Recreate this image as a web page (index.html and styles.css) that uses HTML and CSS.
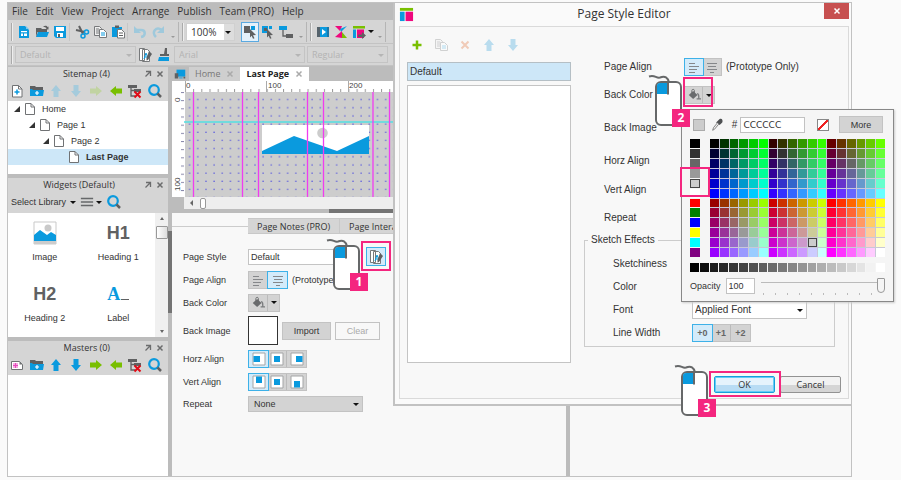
FILE: index.html
```html
<!DOCTYPE html>
<html lang="en">
<head>
<meta charset="utf-8">
<title>Page Style Editor</title>
<link rel="stylesheet" href="styles.css">
</head>
<body>
<svg class="defs" aria-hidden="true">
  <symbol id="i-new" viewBox="0 0 16 16"><path d="M3 2h6l4 4v8H3z" fill="#0a9ade"/><path d="M10 2l3 3h-3z" fill="#7cc8ee"/><path d="M5 7h6v1.300H5zM5 9.500h2V12H5zM8 9.500h3V12H8z" fill="#fff"/></symbol>
  <symbol id="i-open" viewBox="0 0 16 16"><path d="M2 4h5l1 1h5v3H2zM9 3c2-2 4-1 4.500 0l1-.5v3h-3l1-1.200C12 3.500 10.500 3 9 3z" fill="#5f6061"/><path d="M4 8h11l-2 5H2z" fill="#0a9ade"/><path d="M2 6v7l1.500-5z" fill="#5f6061"/></symbol>
  <symbol id="i-save" viewBox="0 0 16 16"><path d="M2 2h12v12H4l-2-2z" fill="#0a9ade"/><path d="M4 3h8v4H4zM5 9h6v4H5z" fill="#fff"/><path d="M6 10h2v3H6z" fill="#5f6061"/></symbol>
  <symbol id="i-cut" viewBox="0 0 16 16"><path d="M2 6l9 2M5 2l4 8" stroke="#5f6061" stroke-width="2" fill="none"/><circle cx="12.500" cy="8" r="2" fill="none" stroke="#0a9ade" stroke-width="1.500"/><circle cx="9" cy="12" r="2" fill="none" stroke="#0a9ade" stroke-width="1.500"/></symbol>
  <symbol id="i-copy" viewBox="0 0 16 16"><path d="M2.500 2.500h5l2 2v7h-7z" fill="#eee" stroke="#77797b"/><path d="M4 5h3M4 7h3M4 9h3" stroke="#77797b"/><path d="M7.500 5.500h4l3 3v5h-7z" fill="#fff" stroke="#77797b"/><path d="M9 9h4M9 11h4" stroke="#0a9ade"/></symbol>
  <symbol id="i-paste" viewBox="0 0 16 16"><path d="M2 3h10v10H2z" fill="#0a9ade"/><path d="M5 1.500h4V4H5z" fill="#5f6061"/><path d="M7.500 5.500h4l3 3v5.500h-7z" fill="#fff" stroke="#77797b"/><path d="M9 9h4M9 11.500h4" stroke="#5f6061"/></symbol>
  <symbol id="i-undo" viewBox="0 0 16 16"><path d="M4 6h5c5 0 5 6 0 7" fill="none" stroke="#9fc9dc" stroke-width="2.500"/><path d="M2 2v7h7z" fill="#9fc9dc"/></symbol>
  <symbol id="i-redo" viewBox="0 0 16 16"><path d="M12 6C6 2 1 8 6 13" fill="none" stroke="#9fc9dc" stroke-width="2.500"/><path d="M14 2v7H7z" fill="#9fc9dc"/></symbol>
  <symbol id="i-sel1" viewBox="0 0 16 16"><path d="M2 2h6v7H2z" fill="#5f6061"/><path d="M9 2h4v4H9z" fill="#0a9ade"/><path d="M8 5l6 6-3 .3 1.500 3-1.500.5-1.300-3L8 13.500z" fill="#5f6061"/></symbol>
  <symbol id="i-sel2" viewBox="0 0 16 16"><path d="M2 2h6v7H2zM9 2h3v3H9z" fill="#0a9ade"/><path d="M4 4h3v3H4z" fill="#5f6061"/><path d="M7 5l6 6-3 .3 1.500 3-1.500.5-1.300-3L7 13.500z" fill="#5f6061"/></symbol>
  <symbol id="i-conn" viewBox="0 0 16 16"><path d="M1 2h8v4H1z" fill="#0a9ade"/><path d="M5 6v6h4" fill="none" stroke="#5f6061" stroke-width="1.300"/><path d="M8 10h7v4H8z" fill="#5f6061"/></symbol>
  <symbol id="i-play" viewBox="0 0 16 16"><path d="M2 3h12v10H2z" fill="#0a9ade"/><path d="M2 3h3v10H2z" fill="#56636c"/><path d="M12 3h2v10h-2z" fill="#1c78a8"/><path d="M7 5l4 3-4 3z" fill="#fff"/></symbol>
  <symbol id="i-share" viewBox="0 0 16 16"><path d="M2 2h7l-2 5z" fill="#ef087e"/><path d="M14 2L8 8l-1-3z" fill="#0a9ade"/><path d="M2 13l7-6v7z" fill="#ef087e"/><path d="M9 8l5 6H9z" fill="#79bf00"/></symbol>
  <symbol id="i-gen" viewBox="0 0 16 16"><path d="M2 2h12v2.500H2z" fill="#79bf00"/><path d="M2 5.500h3V14H2z" fill="#0a9ade"/><path d="M6 5.500h7V14H6z" fill="#ef087e"/><path d="M7 10.500h4V8l4 3.500-4 3.500v-2H7z" fill="#5f6061"/></symbol>
  <symbol id="i-logo" viewBox="0 0 16 16"><path d="M1 1h14v3H1z" fill="#79bf00"/><path d="M1 5h5v10H1z" fill="#0a9ade"/><path d="M7 5h8v10H7z" fill="#ef087e"/></symbol>
  <symbol id="i-style" viewBox="0 0 16 16"><path d="M2.500 1.500h5v12h-5zM5.500 2.500h5l2 2v10h-7z" fill="#fff" stroke="#77797b"/><path d="M7 12l2-6 2 5M7.500 10h3" stroke="#0a9ade" fill="none"/><path d="M12 4l3 3-4 6-1.500.5V11z" fill="#5f6061"/></symbol>
  <symbol id="i-brush" viewBox="0 0 16 16"><path d="M10 1h2v6h-3z" fill="#5f6061"/><path d="M5 7h9v2H5z" fill="#5f6061"/><path d="M4 10h10v4H3z" fill="#0a9ade"/></symbol>
  <symbol id="i-page" viewBox="0 0 16 16"><path d="M3.500 2.500h5.500l3.500 3.500v7.500h-9z" fill="#fff" stroke="#707274"/><path d="M9 2.500V6h3.500" fill="none" stroke="#707274"/></symbol>
  <symbol id="i-addpage" viewBox="0 0 16 16"><path d="M3.500 2.500h6L13 6v8H3.500z" fill="#fff" stroke="#707274"/><path d="M9.500 2.500V6H13" fill="none" stroke="#707274"/><path d="M8 6.500v5M5.500 9h5" stroke="#0a9ade" stroke-width="1.500"/></symbol>
  <symbol id="i-addmaster" viewBox="0 0 16 16"><path d="M2.500 4.500h8l3 3v5h-11z" fill="#fff" stroke="#707274"/><path d="M10.500 4.500v3h3z" fill="#707274"/><path d="M4 6h5v5H4z" fill="#f7a9e2"/><path d="M6.500 6v5M4 8.500h5" stroke="#e549bd"/></symbol>
  <symbol id="i-addfolder" viewBox="0 0 16 16"><path d="M1 3h5l1 1h7v3H1z" fill="#5f6061"/><path d="M1 6h2l1 1h11l-1 6H1z" fill="#0a9ade"/><path d="M8 8v4M6 10h4" stroke="#fff" stroke-width="1.200"/></symbol>
  <symbol id="i-up" viewBox="0 0 16 16"><path d="M8 2l5 6h-2.500v6h-5V8H3z"/></symbol>
  <symbol id="i-down" viewBox="0 0 16 16"><path d="M8 14l5-6h-2.500V2h-5v6H3z"/></symbol>
  <symbol id="i-right" viewBox="0 0 16 16"><path d="M14 8L8 3v2.500H2v5h6V13z"/></symbol>
  <symbol id="i-left" viewBox="0 0 16 16"><path d="M2 8l6-5v2.500h6v5H8V13z"/></symbol>
  <symbol id="i-del" viewBox="0 0 16 16"><path d="M1 2h9v3H1zM7 6h7v3H7z" fill="#5f6061"/><path d="M4 5v8h4M4 7.500h4" fill="none" stroke="#5f6061" stroke-width="1.300"/><path d="M7.500 8.500l6 6M13.500 8.500l-6 6" stroke="#e10b17" stroke-width="2"/></symbol>
  <symbol id="i-find" viewBox="0 0 16 16"><circle cx="7" cy="7" r="4.800" fill="none" stroke="#0a9ade" stroke-width="2.200"/><path d="M10.500 10.500L14 14" stroke="#5f6061" stroke-width="2.500"/></symbol>
  <symbol id="i-pop" viewBox="0 0 8 8"><path d="M2 1.500h4.500V6M6.500 1.500L1.500 6.500" fill="none" stroke="#6b6c6d" stroke-width="1.300"/></symbol>
  <symbol id="i-x" viewBox="0 0 8 8"><path d="M1.500 1.500l5 5M6.500 1.500l-5 5" fill="none" stroke="currentColor" stroke-width="1.500"/></symbol>
  <symbol id="i-list" viewBox="0 0 16 16"><path d="M1 4h14M1 8h14M1 12h14" stroke="#66686a" stroke-width="1.700"/></symbol>
  <symbol id="i-al" viewBox="1 1 14 14"><path d="M3 4.500h6M3 7.500h10M3 10.500h8M3 13.500h6" stroke="#85878a"/></symbol>
  <symbol id="i-ac" viewBox="1 1 14 14"><path d="M3 4.500h10M4 7.500h8M3 10.500h10M6 13.500h4" stroke="#85878a"/></symbol>
  <symbol id="i-fill" viewBox="0 0 16 16"><path d="M7 3.500l5 4.500-5 4.500L2 8z" fill="#696b6d"/><path d="M5.500 6V3c0-2 3-2 3 0v3" fill="none" stroke="#696b6d"/><path d="M11.500 6.500c2 0 2 2 2 6M11 12.500h5" stroke="#7a7c7e" fill="none" stroke-width="1.500"/></symbol>
  <symbol id="i-hl" viewBox="1 1 14 14"><path d="M2 2h12v12H2z" fill="#fff" stroke="#a4a5a6"/><path d="M2.500 5h6.500v6H2.500z" fill="#0a9ade"/></symbol>
  <symbol id="i-mc" viewBox="1 1 14 14"><path d="M2 2h12v12H2z" fill="#fff" stroke="#a4a5a6"/><path d="M5 5h6v6H5z" fill="#0a9ade"/></symbol>
  <symbol id="i-hr" viewBox="1 1 14 14"><path d="M2 2h12v12H2z" fill="#fff" stroke="#a4a5a6"/><path d="M7 5h6.500v6H7z" fill="#0a9ade"/></symbol>
  <symbol id="i-vt" viewBox="1 1 14 14"><path d="M2 2h12v12H2z" fill="#fff" stroke="#a4a5a6"/><path d="M5 2.500h6V9H5z" fill="#0a9ade"/></symbol>
  <symbol id="i-vb" viewBox="1 1 14 14"><path d="M2 2h12v12H2z" fill="#fff" stroke="#a4a5a6"/><path d="M5 7h6v6.500H5z" fill="#0a9ade"/></symbol>
  <symbol id="i-screen" viewBox="0 0 16 16"><path d="M4 3h10v8H4z" fill="#0a9ade"/><path d="M2 7h4v6H2zM12 11h2v2h-2z" fill="#5f6061"/><path d="M7 12h4v1H7z" fill="#0a9ade"/></symbol>
  <symbol id="i-plus" viewBox="0 0 16 16"><path d="M8 3.500v9M3.500 8h9" stroke="#79bf00" stroke-width="2.500"/></symbol>
  <symbol id="i-remove" viewBox="0 0 16 16"><path d="M4.500 4.500l7 7M11.500 4.500l-7 7" stroke="#f0cbb8" stroke-width="2"/></symbol>
  <symbol id="i-drop" viewBox="0 0 16 16"><path d="M11 1c3-1 4 2 3 4l-3 3-4-3z" fill="#4e5052"/><path d="M8.500 5.500L4 11l-1 3 2-1 5-6" fill="#eee" stroke="#777"/></symbol>
  <symbol id="i-mouse" viewBox="0 0 44 54"><path d="M1 2.500c6-2 7 2 11 1 5-2 8 0 9 5" fill="none" stroke="#666869" stroke-width="2"/><rect x="8" y="8" width="25" height="43" rx="5" fill="#fff" stroke="#666869" stroke-width="2"/><path d="M9 20V12q0-3 3-3h7v11z" fill="#0a9ade"/><path d="M20 9v11.500" stroke="#666869" stroke-width="2"/></symbol>
</svg>

<main class="app">
  <nav class="menubar"><a href="#">File</a><a href="#">Edit</a><a href="#">View</a><a href="#">Project</a><a href="#">Arrange</a><a href="#">Publish</a><a href="#">Team (PRO)</a><a href="#">Help</a></nav>

  <div class="toolbar">
    <span class="grip"></span>
    <button aria-label="New"><svg><use href="#i-new"/></svg></button>
    <button aria-label="Open"><svg><use href="#i-open"/></svg></button>
    <button aria-label="Save"><svg><use href="#i-save"/></svg></button>
    <span class="sep"></span>
    <button aria-label="Cut"><svg><use href="#i-cut"/></svg></button>
    <button aria-label="Copy"><svg><use href="#i-copy"/></svg></button>
    <button aria-label="Paste"><svg><use href="#i-paste"/></svg></button>
    <span class="sep"></span>
    <button aria-label="Undo"><svg><use href="#i-undo"/></svg></button>
    <button aria-label="Redo"><svg><use href="#i-redo"/></svg></button>
    <span class="more"></span>
    <span class="grip"></span>
    <span class="combo zoom"><select aria-label="Zoom"><option>100%</option></select></span>
    <button class="on" aria-label="Select"><svg><use href="#i-sel1"/></svg></button>
    <button aria-label="Select contained"><svg><use href="#i-sel2"/></svg></button>
    <button aria-label="Connector"><svg><use href="#i-conn"/></svg></button>
    <span class="more"></span>
    <span class="grip"></span>
    <button aria-label="Preview"><svg><use href="#i-play"/></svg></button>
    <button aria-label="Share"><svg><use href="#i-share"/></svg></button>
    <button aria-label="Generate"><svg><use href="#i-gen"/></svg></button>
    <span class="caret"></span>
    <span class="more"></span>
  </div>
  <div class="toolbar second">
    <span class="grip"></span>
    <span class="combo off w-style"><select aria-label="Widget style" disabled><option>Default</option></select></span>
    <button aria-label="Style editor"><svg><use href="#i-style"/></svg></button>
    <button aria-label="Format painter"><svg><use href="#i-brush"/></svg></button>
    <span class="combo off w-font"><select aria-label="Font" disabled><option>Arial</option></select></span>
    <span class="combo off w-face"><select aria-label="Typeface" disabled><option>Regular</option></select></span>
  </div>

  <div class="work">
    <aside class="side">
      <section class="pane sitemap">
        <h2>Sitemap (4)<svg><use href="#i-pop"/></svg><svg><use href="#i-x"/></svg></h2>
        <div class="icons">
          <svg><use href="#i-addpage"/></svg><svg><use href="#i-addfolder"/></svg><svg class="pale"><use href="#i-up"/></svg><svg class="pale"><use href="#i-down"/></svg><svg class="palegreen"><use href="#i-right"/></svg><svg class="green"><use href="#i-left"/></svg><svg><use href="#i-del"/></svg><svg><use href="#i-find"/></svg>
        </div>
        <ul class="tree">
          <li><i></i><svg><use href="#i-page"/></svg>Home</li>
          <li class="l1"><i></i><svg><use href="#i-page"/></svg>Page 1</li>
          <li class="l2"><i></i><svg><use href="#i-page"/></svg>Page 2</li>
          <li class="l3"><svg><use href="#i-page"/></svg>Last Page</li>
        </ul>
      </section>
      <section class="pane widgets">
        <h2>Widgets (Default)<svg><use href="#i-pop"/></svg><svg><use href="#i-x"/></svg></h2>
        <div class="library">Select Library<span class="caret"></span><svg><use href="#i-list"/></svg><span class="caret"></span><svg><use href="#i-find"/></svg></div>
        <div class="shelf">
          <div class="tiles">
            <figure><svg class="pic" viewBox="0 0 24 24"><path d="M1 1h22v22H1z" fill="#fff" stroke="#c9c9c9"/><circle cx="15" cy="7" r="3.500" fill="#c9c9c9"/><path d="M1 14l6-5 7 5 4-3 5 3v6H1z" fill="#0a9ade"/><path d="M1 20h22v3H1z" fill="#ccc"/></svg><figcaption>Image</figcaption></figure>
            <figure><b>H1</b><figcaption>Heading 1</figcaption></figure>
            <figure><b>H2</b><figcaption>Heading 2</figcaption></figure>
            <figure><b class="a">A<u></u></b><figcaption>Label</figcaption></figure>
          </div>
          <div class="vscroll"><i class="tri-up"></i><span></span><i class="tri-down"></i></div>
        </div>
      </section>
      <section class="pane masters">
        <h2>Masters (0)<svg><use href="#i-pop"/></svg><svg><use href="#i-x"/></svg></h2>
        <div class="icons">
          <svg><use href="#i-addmaster"/></svg><svg><use href="#i-addfolder"/></svg><svg class="blue"><use href="#i-up"/></svg><svg class="blue"><use href="#i-down"/></svg><svg class="green"><use href="#i-right"/></svg><svg class="green"><use href="#i-left"/></svg><svg><use href="#i-del"/></svg><svg><use href="#i-find"/></svg>
        </div>
        <div class="blank"></div>
      </section>
    </aside>
    <div class="splitter"><span></span></div>

    <div class="center">
      <div class="tabs">
        <svg><use href="#i-screen"/></svg>
        <span class="tab">Home<svg><use href="#i-x"/></svg></span>
        <span class="tab current">Last Page<svg><use href="#i-x"/></svg></span>
      </div>
      <svg class="design" viewBox="0 0 680 116">
        <defs>
          <pattern id="dots" x="13" y="12" width="8.170" height="8.170" patternUnits="userSpaceOnUse"><rect x="4" y="6" width="1.200" height="1.200" fill="#4a4ae0"/></pattern>
          <pattern id="th" x="13" y="0" width="8.170" height="11" patternUnits="userSpaceOnUse"><path d="M.5 8v3" stroke="#999"/></pattern>
          <pattern id="tv" x="0" y="11" width="12" height="8.170" patternUnits="userSpaceOnUse"><path d="M9 .5h3" stroke="#88a"/></pattern>
        </defs>
        <path d="M0 0h680v116H0z" fill="#fff"/>
        <path d="M13 11h667v105H13z" fill="#cdcdcd"/>
        <path d="M13 11h667v105H13z" fill="url(#dots)"/>
        <path d="M13 0h667v11H13z" fill="url(#th)"/>
        <path d="M0 11h12v105H0z" fill="url(#tv)"/>
        <path d="M13.500 0v11M94.500 0v11M176.500 0v11" stroke="#aaa"/>
        <path d="M12 41h668" stroke="#52dfe2" stroke-width="1.500"/>
        <path d="M90 44h107v29H90z" fill="#fff"/>
        <circle cx="150.500" cy="52" r="5.300" fill="#ccc"/>
        <path d="M90 70l32-15 43 15 32-15v18H90z" fill="#0a9ade"/>
        <path d="M21.500 11v105M70.500 11v105M86.500 11v105M135.500 11v105M151.500 11v105M201 11v105M217.500 11v105" stroke="#f03cf0" stroke-width="1.300"/>
        <g class="rule"><text x="14" y="7">0</text><text x="96" y="7">100</text><text x="177" y="7">200</text><text transform="translate(8 21) rotate(-90)">0</text><text transform="translate(8 110) rotate(-90)">100</text></g>
      </svg>
      <div class="hscroll"><i></i><span></span></div>
      <div class="hsplit"><span></span></div>
      <div class="bottom">
        <section class="props">
          <div class="proptabs"><button>Page Notes (PRO)</button><button>Page Interactions</button><button>Page Style</button></div>
          <div class="form">
            <label for="ps">Page Style</label>
            <div><span class="combo box"><select id="ps"><option>Default</option></select></span><button class="editor" aria-label="Edit page styles"><svg><use href="#i-style"/></svg></button></div>
            <span>Page Align</span>
            <div><span class="seg"><button aria-label="Left"><svg><use href="#i-al"/></svg></button><button class="on" aria-label="Center"><svg><use href="#i-ac"/></svg></button></span><span class="hint">(Prototype</span></div>
            <span>Back Color</span>
            <div><span class="seg"><button aria-label="Fill"><svg><use href="#i-fill"/></svg></button><button class="thin" aria-label="Choose color"><i class="caret"></i></button></span></div>
            <span>Back Image</span>
            <div><span class="preview"></span><button class="btn">Import</button><button class="btn dim" disabled>Clear</button></div>
            <span>Horz Align</span>
            <div><span class="seg"><button class="on" aria-label="Left"><svg><use href="#i-hl"/></svg></button><button aria-label="Center"><svg><use href="#i-mc"/></svg></button><button aria-label="Right"><svg><use href="#i-hr"/></svg></button></span></div>
            <span>Vert Align</span>
            <div><span class="seg"><button class="on" aria-label="Top"><svg><use href="#i-vt"/></svg></button><button aria-label="Middle"><svg><use href="#i-mc"/></svg></button><button aria-label="Bottom"><svg><use href="#i-vb"/></svg></button></span></div>
            <label for="rep">Repeat</label>
            <div><span class="combo grey"><select id="rep"><option>None</option></select></span></div>
          </div>
        </section>
        <section class="outline"></section>
      </div>
    </div>
  </div>

  <section class="dialog" role="dialog" aria-label="Page Style Editor">
    <header><svg><use href="#i-logo"/></svg><h1>Page Style Editor</h1><button aria-label="Close"><svg><use href="#i-x"/></svg></button></header>
    <div class="inner">
      <div class="styles">
        <div class="tools"><svg><use href="#i-plus"/></svg><svg class="faint"><use href="#i-copy"/></svg><svg><use href="#i-remove"/></svg><svg class="ice"><use href="#i-up"/></svg><svg class="ice"><use href="#i-down"/></svg></div>
        <div class="picked">Default</div>
        <div class="listbox"></div>
      </div>
      <div class="settings">
        <div class="line"><span>Page Align</span><span class="seg"><button class="on" aria-label="Left"><svg><use href="#i-al"/></svg></button><button aria-label="Center"><svg><use href="#i-ac"/></svg></button></span><span class="hint">(Prototype Only)</span></div>
        <div class="line"><span>Back Color</span><span class="seg"><button aria-label="Fill"><svg><use href="#i-fill"/></svg></button><button class="thin" aria-label="Choose color"><i class="caret"></i></button></span></div>
        <div class="line tall">Back Image</div>
        <div class="line mid">Horz Align</div>
        <div class="line">Vert Align</div>
        <div class="line">Repeat</div>
        <fieldset>
          <legend>Sketch Effects</legend>
          <div class="row">Sketchiness</div>
          <div class="row">Color</div>
          <div class="row"><label for="font">Font</label><span class="combo white"><select id="font"><option>Applied Font</option></select></span></div>
          <div class="row"><span>Line Width</span><span class="seg nums"><button class="on">+0</button><button>+1</button><button>+2</button></span></div>
        </fieldset>
        <div class="actions"><button class="ok">OK</button><button>Cancel</button></div>
      </div>
    </div>
  </section>

  <section class="picker" aria-label="Color picker">
    <div class="hex"><i class="chip"></i><svg><use href="#i-drop"/></svg><label for="hex">#</label><input id="hex" value="CCCCCC"><i class="none"></i><button>More</button></div>
    <div class="swatches"><div class="basic" id="basic"></div><div class="cube" id="cube"></div></div>
    <div class="greys" id="greys"></div>
    <div class="opacity"><label for="op">Opacity</label><input id="op" value="100"><span class="slide"><input type="range" value="100" aria-label="Opacity level"><span class="ticks"></span></span></div>
  </section>

  <div class="frame f1"></div><div class="frame f2"></div><div class="frame f3"></div><div class="frame f4"></div>
  <div class="callout c1"><svg><use href="#i-mouse"/></svg><b>1</b></div>
  <div class="callout c2"><svg><use href="#i-mouse"/></svg><b>2</b></div>
  <div class="callout c3"><svg><use href="#i-mouse"/></svg><b>3</b></div>
</main>
<script src="palette.js"></script>
</body>
</html>
```
FILE: palette.js
```js
function fill(id, colors, picked) {
  const host = document.getElementById(id);
  colors.forEach(function (color) {
    const cell = document.createElement("i");
    cell.style.background = color;
    if (color === picked) cell.className = "picked-cell";
    host.appendChild(cell);
  });
}

const steps = [0, 51, 102, 153, 204, 255];
const cube = [];
for (let row = 0; row < 12; row++) {
  for (let col = 0; col < 18; col++) {
    const red = steps[Math.floor(col / 6) + (row > 5 ? 3 : 0)];
    cube.push("rgb(" + red + "," + steps[col % 6] + "," + steps[row % 6] + ")");
  }
}
fill("cube", cube, "rgb(204,204,204)");
fill("basic", ["#000", "#333", "#666", "#999", "#ccc", "#fff", "#f00", "#008000", "#00f", "#ff0", "#0ff", "#800080"], "#ccc");

const greys = [];
for (let n = 0; n < 20; n++) {
  const v = Math.round(n * 255 / 19);
  greys.push("rgb(" + v + "," + v + "," + v + ")");
}
fill("greys", greys);
```
FILE: styles.css
```css
* { box-sizing: border-box; }
body { margin: 0; background: #fafafa; color: #333; font: 9px/12px "Liberation Sans", Arial, sans-serif; }
svg { width: 16px; height: 16px; flex: none; display: block; }
.defs { position: absolute; width: 0; height: 0; }
button, input, select { font: inherit; color: inherit; margin: 0; padding: 0; border: 0; background: none; border-radius: 0; }
button { display: flex; align-items: center; justify-content: center; }
select { appearance: none; width: 100%; height: 100%; padding: 0 4px; opacity: 1; }
h1, h2, ul, figure, fieldset { margin: 0; padding: 0; }
i { display: block; font-style: normal; }

.app { position: relative; margin: 2px 49px 0 7px; border: 1px solid #c2c2c2; display: flex; flex-direction: column; min-height: 475px; background: #bcbcbc; }
.menubar { display: flex; gap: 8px; height: 17px; padding-left: 4px; font: 10px/17px "Open Sans", sans-serif; }
.menubar a { color: #333; text-decoration: none; }

.caret { width: 0; height: 0; border: 3px solid transparent; border-top-color: #111; border-bottom: 0; flex: none; }
.toolbar { display: flex; align-items: center; height: 24px; background: #d5d5d5; border-bottom: 1px solid #c3c3c3; }
.toolbar button { width: 18px; height: 20px; flex: none; }
.toolbar .on { background: #e4f1fb; border: 1px solid #5aa9e0; }
.toolbar .sep { width: 4px; height: 18px; border-left: 1px solid #c6c6c6; }
.toolbar .grip { width: 2px; height: 18px; margin: 0 2px 0 3px; border-left: 1px solid #aaa; border-right: 1px solid #eee; flex: none; }
.more { width: 12px; height: 20px; border-right: 1px solid #b5b5b5; position: relative; flex: none; }
.more::after { content: ""; position: absolute; left: 4px; bottom: 2px; border: 2px solid transparent; border-top-color: #999; }
.combo { position: relative; display: block; }
.combo::after { content: ""; position: absolute; right: 3px; top: 50%; margin-top: -1px; border: 3px solid transparent; border-top-color: #111; border-bottom: 0; pointer-events: none; }
.zoom { width: 49px; height: 18px; margin-right: 6px; border: 1px solid #d0d0d0; background: linear-gradient(to left, #ddd 10px, #fff 10px); font: 10px "Open Sans", sans-serif; flex: none; }
.second { height: 22px; margin-bottom: 1px; }
.second .combo { height: 17px; border: 1px solid #c4c4c4; font: 9px "Open Sans", sans-serif; color: #b3b3b3; flex: none; }
.off::after { border-top-color: #b5b5b5; }
.w-style { width: 121px; }
.w-font { width: 131px; margin: 0 2px; }
.w-face { width: 81px; }

.work { flex: 1; display: flex; }
.side { width: 160px; display: flex; flex-direction: column; gap: 4px; flex: none; }
.pane { background: #d5d5d5; }
.pane h2 { display: flex; align-items: center; justify-content: flex-end; gap: 4px; height: 13px; padding: 0 4px; font: 9px/13px "Open Sans", sans-serif; color: #333; }
.pane h2 svg { width: 8px; height: 8px; color: #6b6c6d; }
.pane h2 svg:first-of-type { margin-left: 30px; }
.icons { display: flex; justify-content: space-between; align-items: center; height: 21px; padding: 0 5px 0 1px; }
.pale { fill: #a5cbdc; } .palegreen { fill: #c1d3a2; } .green { fill: #79bf00; } .blue { fill: #0a9ade; } .ice { fill: #b9dcee; }
.faint { opacity: .3; }
.tree { list-style: none; height: 73px; background: #fff; }
.tree li { display: flex; align-items: center; height: 16px; padding-left: 6px; }
.tree svg { margin: 0 4px 0 2px; }
.tree i { border: 3px solid transparent; border-right-color: #333; border-bottom-color: #333; }
.tree .l1 { padding-left: 21px; } .tree .l2 { padding-left: 35px; }
.tree .l3 { padding-left: 56px; background: #cde7f8; font-weight: bold; }
.widgets h2 svg:first-of-type { margin-left: 25px; }
.library { display: flex; align-items: center; gap: 4px; height: 22px; padding-left: 3px; font-size: 9px; }
.library .caret + svg { width: 14px; margin-right: -2px; }
.library .caret + svg:last-child { width: 16px; }
.shelf { display: flex; height: 124px; background: #fff; }
.tiles { flex: 1; display: grid; grid-template-columns: 1fr 1fr; grid-auto-rows: 61px; padding-top: 8px; }
.tiles figure { display: flex; flex-direction: column; align-items: center; }
.tiles .pic { width: 24px; height: 24px; }
.tiles b { height: 24px; font: bold 18px/24px "Liberation Sans", sans-serif; color: #606162; }
.tiles .a { display: flex; font-family: "Liberation Serif", serif; color: #0a9ade; }
.tiles u { width: 8px; height: 18px; margin-left: 1px; border-bottom: 1px solid #606162; }
.tiles figcaption { margin-top: 6px; }
.vscroll { width: 13px; background: #f0f0f0; display: flex; flex-direction: column; align-items: center; padding: 4px 0; }
.vscroll span { width: 12px; height: 13px; margin: 6px 0 auto; border: 1px solid #999; background: linear-gradient(to right, #fff, #ddd); border-radius: 1px; }
.tri-up { border: 2px solid transparent; border-bottom: 3px solid #666; border-top: 0; }
.tri-down { border: 2px solid transparent; border-top: 3px solid #666; border-bottom: 0; }
.masters { flex: 1; display: flex; flex-direction: column; }
.blank { flex: 1; background: #fff; }
.splitter { width: 4px; display: flex; align-items: center; flex: none; }
.splitter span { width: 4px; height: 82px; background: #747474; }

.center { flex: 1; min-width: 0; display: flex; flex-direction: column; }
.tabs { display: flex; height: 14px; font: 9px/14px "Open Sans", sans-serif; }
.tabs > svg { height: 14px; margin-right: 1px; }
.tab { display: flex; align-items: center; gap: 6px; padding: 0 6px; background: #cfcfcf; color: #777; }
.tab svg { width: 8px; height: 8px; color: #aaa; }
.current { background: #fff; color: #222; font-weight: bold; }
svg.design { width: 680px; height: 116px; overflow: hidden; }
.rule { font-size: 8px; fill: #444; }
.hscroll { display: flex; align-items: center; height: 12px; margin-left: 12px; padding-left: 6px; gap: 7px; background: #eee; }
.hscroll i { border: 3px solid transparent; border-right-color: #666; border-left: 0; }
.hscroll span { width: 6px; height: 11px; border: 1px solid #999; background: #fff; border-radius: 2px; }
.hsplit { height: 4px; padding-left: 157px; }
.hsplit span { display: block; width: 82px; height: 4px; background: #747474; }
.bottom { flex: 1; display: flex; }
.props { width: 394px; background: #f8f8f8; padding-top: 5px; overflow: hidden; }
.outline { flex: 1; margin-left: 4px; background: #f8f8f8; }
.proptabs { display: flex; padding-left: 76px; background: linear-gradient(#ccc, #ccc) 0 8px / 76px 1px no-repeat; font: 9px "Open Sans", sans-serif; }
.proptabs button { height: 16px; padding: 0 9px; background: #d5d5d5; border: 1px solid #c8c8c8; border-left-width: 0; white-space: nowrap; }
.form { display: grid; grid-template-columns: 65px 1fr; grid-template-rows: 23px 23px 23px 33px 24px 22px 21px; align-items: center; padding: 11px 0 0 11px; }
.form > div { display: flex; align-items: center; }
.seg { display: flex; background: #d3d3d3; border: 1px solid #c2c2c2; }
.seg button { width: 18px; height: 16px; border-right: 1px solid #bbb; }
.seg button:last-child { border-right: 0; }
.seg .on, .seg .on:last-child { background: #d3ebfa; border: 0; outline: 1px solid #3db1e8; }
.form .seg button { width: 19px; }
.seg .thin, .form .seg .thin { width: 11px; }
.seg svg { width: 14px; height: 14px; }
.hint { margin-left: 4px; white-space: nowrap; }
.box { width: 108px; height: 16px; border: 1px solid #c4c4c4; background: #fff; }
.box select, .grey select { padding: 0 2px; }
.editor { width: 20px; height: 19px; margin-left: 10px; background: #d3ebfa; border: 1px solid #3db1e8; }
.preview { width: 30px; height: 29px; border: 1px solid #333; background: #fff; }
.btn { width: 49px; height: 18px; margin-left: 4px; border: 1px solid #c3c3c3; background: #d3d3d3; }
.dim { width: 45px; background: #f8f8f8; color: #aaa; }
.grey { width: 115px; height: 16px; border: 1px solid #c3c3c3; background: #d3d3d3; }
.grey select { padding-left: 5px; }

.dialog { position: absolute; top: -1px; right: -1px; left: 385px; padding: 0 2px 5px 4px; border: 1px solid #c2c2c2; border-width: 1px 1px 2px 2px; background: #fafafa; font-size: 10px; }
.dialog header { display: flex; align-items: center; height: 22px; }
.dialog header svg { width: 15px; height: 15px; }
.dialog h1 { flex: 1; margin-left: 10px; text-align: center; font: 12px/22px "Open Sans", sans-serif; color: #333; }
.dialog header button { width: 25px; height: 16px; align-self: flex-start; background: #c75050; color: #fff; }
.dialog header button svg { width: 8px; height: 8px; }
.inner { display: flex; height: 373px; margin-top: 1px; border: 1px solid #dadada; background: #f8f8f8; }
.styles { width: 164px; margin-left: 7px; display: flex; flex-direction: column; }
.tools { display: flex; gap: 8px; padding: 10px 2px 9px; }
.picked { height: 19px; padding: 3px 2px; border: 1px solid #b5bfc5; background: #cde7f8; }
.listbox { height: 278px; margin-top: 4px; border: 1px solid #c4c4c4; background: #fff; }
.settings { flex: 1; padding: 26px 13px 0 13px; display: flex; flex-direction: column; }
.line { display: flex; align-items: center; height: 28px; padding-left: 20px; }
.line > span:first-child { width: 80px; }
.tall { height: 37px; } .mid { height: 30px; }
fieldset { margin-top: 2px; height: 113px; border: 1px solid #ccc; padding: 6px 0 0 28px; min-width: 0; }
legend { padding: 0 3px; margin-left: -25px; }
.row { display: flex; align-items: center; height: 23px; }
.row > :first-child { width: 79px; }
.white { width: 115px; height: 18px; border: 1px solid #c4c4c4; background: #fff; }
.white select { padding: 0 2px; }
.nums { font: bold 9px "Liberation Sans", sans-serif; color: #666; }
.nums button { width: 19px; }
.actions { display: flex; justify-content: flex-end; gap: 5px; margin-top: 29px; margin-right: -6px; }
.actions button { width: 61px; height: 17px; border: 1px solid #929292; border-radius: 2px; background: linear-gradient(#f2f2f2 50%, #d5d5d5 50%); font: 9px "Open Sans", sans-serif; }
.actions .ok { border: 1px solid #169edb; box-shadow: inset 0 0 0 1px #65cdf5; background: linear-gradient(#e5f3fc 50%, #b8dcf4 50%); }

.picker { position: absolute; left: 673px; top: 106px; width: 213px; padding: 6px 8px 4px; border: 1px solid #888; background: #f5f5f5; box-shadow: 1px 1px 2px #ccc; }
.hex { display: flex; align-items: center; height: 17px; margin: 0 2px; }
.hex .chip { width: 12px; height: 12px; margin-left: 1px; border: 1px solid #aaa; background: #ccc; }
.hex > svg { width: 14px; margin: 0 8px 0 5px; }
.hex label { width: 9px; font-size: 10px; }
.picker input { border: 1px solid #c2c2c2; background: #fff; }
.hex input { width: 65px; height: 16px; padding: 0 2px; font-family: "DejaVu Sans", sans-serif; font-size: 9px; }
.none { width: 12px; height: 12px; margin: 0 10px 0 12px; border: 1px solid #888; background: linear-gradient(135deg, #fff 43%, #e22 43%, #e22 57%, #fff 57%); }
.hex button { width: 45px; height: 17px; border: 1px solid #c3c3c3; background: #d3d3d3; font-size: 9px; }
.swatches { display: flex; height: 118px; margin-top: 6px; gap: 10px; }
.basic, .cube { display: grid; gap: 1px; grid-auto-rows: 1fr; }
.basic { width: 10px; }
.cube { flex: 1; grid-template-columns: repeat(18, 1fr); background: #c8c8d8; }
.picked-cell { border: 1px solid #444; }
.greys { display: grid; grid-template-columns: repeat(20, 1fr); gap: 1px; height: 9px; margin-top: 6px; }
.opacity { display: flex; align-items: center; height: 22px; margin-top: 3px; }
.opacity > input { width: 29px; height: 16px; margin-left: 5px; padding: 0 2px; }
.slide { flex: 1; margin-left: 6px; }
.slide .ticks { display: block; height: 2px; margin: 0 2px; background: repeating-linear-gradient(to right, #bbb 0 1px, transparent 1px 12px); }
.slide input { appearance: none; display: block; width: 100%; height: 16px; border: 0; background: linear-gradient(#bbb, #bbb) 0 5px / 100% 1px no-repeat; }
.slide input::-webkit-slider-thumb { appearance: none; width: 8px; height: 15px; border: 1px solid #999; border-radius: 1px 1px 4px 4px; background: #f5f5f5; }

.frame { position: absolute; border: 2px solid #f4267f; width: 30px; height: 30px; pointer-events: none; }
.f1 { left: 353px; top: 238px; } .f2 { left: 675px; top: 74px; } .f3 { left: 672px; top: 164px; }
.f4 { left: 701px; top: 368px; width: 72px; height: 26px; }
.callout { position: absolute; width: 44px; height: 54px; }
.callout svg { width: 44px; height: 54px; }
.callout b { position: absolute; left: 24px; top: 35px; width: 18px; height: 18px; background: #f4267f; color: #fff; font: bold 12px/18px "Open Sans", sans-serif; text-align: center; }
.c1 { left: 318px; top: 235px; } .c2 { left: 640px; top: 71px; } .c3 { left: 666px; top: 361px; }
```
